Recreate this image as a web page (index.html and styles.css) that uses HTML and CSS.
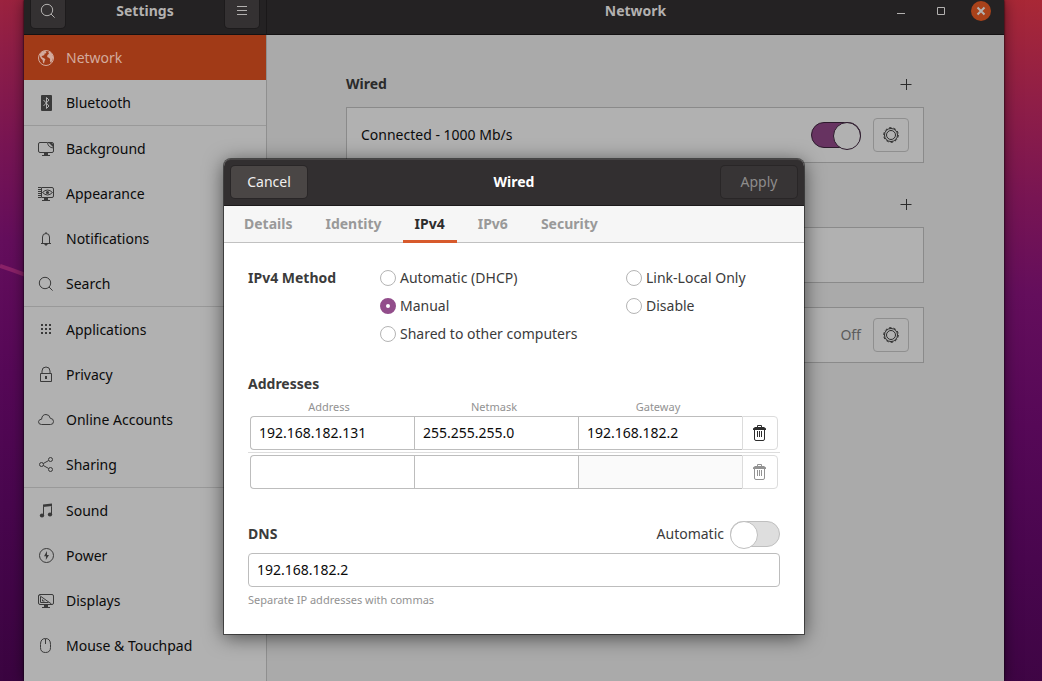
FILE: index.html
```html
<!DOCTYPE html>
<html lang="en">
<head>
<meta charset="utf-8">
<meta name="viewport" content="width=device-width, initial-scale=1">
<title>Settings – Network</title>
<link rel="stylesheet" href="styles.css">
</head>
<body class="desktop">
<svg class="streak" viewBox="0 0 26 20" aria-hidden="true"><path d="M0 4Q12 8 26 13" /></svg>
<div class="window">
  <aside class="sidebar">
    <header class="bar">
      <button class="bar-btn" aria-label="Search settings"><svg class="icon" viewBox="0 0 16 16"><circle cx="7" cy="7" r="5.7"/><path d="M11 11l3.6 3.6"/></svg></button>
      <h1 class="bar-title">Settings</h1>
      <button class="bar-btn" aria-label="Menu"><svg class="icon" viewBox="0 0 16 16"><path d="M3 3.5h10M3 7.5h10M3 11.5h10"/></svg></button>
    </header>
    <nav class="nav">
      <ul class="group">
        <li><a class="item active" href="#network"><svg class="icon" viewBox="0 0 16 16"><circle cx="8" cy="8" r="7.5"/><path class="solid" d="M1.500 4.500L4 1.800 7 .800 8.500 2 8 3.200 6.300 3.800 6.500 5 4.800 5.700 3.600 6 4 7.200 5.600 8 7.400 9.300 6.600 11 6 13.500 5 12.400 4.600 10 3 8.400 2 6.500zM10.200 2l1.800-.600 2.400 3 .800 2.600-.800 3.600-1.600 2.200-1-1.800.4-2-1.400-1.200-1.600-.800.2-2 1.600-1.200z"/></svg>Network</a></li>
        <li><a class="item" href="#bluetooth"><svg class="icon" viewBox="0 0 16 16"><rect class="solid" x="3" y="0" width="11" height="16" rx="1"/><path class="knock" d="M5.5 5l5.5 6-2.5 2.5v-11L11 5l-5.5 6"/></svg>Bluetooth</a></li>
      </ul>
      <ul class="group">
        <li><a class="item" href="#background"><svg class="icon" viewBox="0 0 16 16"><path d="M9 1.500H2q-1.500 0-1.500 1.500v7q0 1.500 1.500 1.500h12q1.500 0 1.500-1.500V7M9.500 1.500q.500 5 6 5.500V3q0-1.500-1.500-1.500z"/><path class="solid" d="M11 2l4 4V3.500Q15 2 13.500 2zM6 12h4v2h2v1H4v-1h2z"/></svg>Background</a></li>
        <li><a class="item" href="#appearance"><svg class="icon" viewBox="0 0 16 16"><path d="M3.500 1.500h10.500q1.500 0 1.500 1.500v7q0 1.500-1.500 1.500H3.500z"/><path class="dash" d="M1.500 1v11"/><path d="M4.500 6.500q5-5 10 0q-5 5-10 0z"/><circle class="solid" cx="9.500" cy="6.500" r="1.600"/><path class="solid" d="M6 12h4v2h2v1H4v-1h2z"/></svg>Appearance</a></li>
        <li><a class="item" href="#notifications"><svg class="icon" viewBox="0 0 16 16"><path d="M3 12.500h10M4.500 12V6q0-3.500 3.500-3.500T11.500 6v6M8 1v1.500"/><path class="solid" d="M6 13h4L8 15z"/></svg>Notifications</a></li>
        <li><a class="item" href="#search"><svg class="icon" viewBox="0 0 16 16"><circle cx="7" cy="7" r="5.700"/><path d="M11 11l3.600 3.600"/></svg>Search</a></li>
      </ul>
      <ul class="group">
        <li><a class="item" href="#applications"><svg class="icon" viewBox="0 0 16 16"><path class="solid" d="M3 2h2v2H3zM7 2h2v2H7zM11 2h2v2h-2zM3 6h2v2H3zM7 6h2v2H7zM11 6h2v2h-2zM3 10h2v2H3zM7 10h2v2H7zM11 10h2v2h-2z"/></svg>Applications</a></li>
        <li><a class="item" href="#privacy"><svg class="icon" viewBox="0 0 16 16"><path d="M2.500 6.500h11v8h-11zM4 6.500V4q0-4 4-4t4 4v2.500"/><path class="solid" d="M7 9h2v3H7z"/></svg>Privacy</a></li>
        <li><a class="item" href="#accounts"><svg class="icon" viewBox="0 0 16 16"><path d="M3.500 12.500Q.500 12.500.500 9.700 1 7.200 3.600 7.200 4 2.500 8 2.500q3.500 0 4.300 3.800 3.200.200 3.200 3.200t-3 3z"/></svg>Online Accounts</a></li>
        <li><a class="item" href="#sharing"><svg class="icon" viewBox="0 0 16 16"><circle cx="3.500" cy="7.500" r="2"/><circle cx="12.500" cy="2.500" r="2"/><circle cx="12.500" cy="12.500" r="2"/><path d="M5.300 6.500l5.400-3M5.300 8.500l5.400 3"/></svg>Sharing</a></li>
      </ul>
      <ul class="group">
        <li><a class="item" href="#sound"><svg class="icon" viewBox="0 0 16 16"><path class="solid" d="M5 1.500L14 .500V3L5 4zM5 1.500h1V12H5zM13 1h1v10h-1z"/><ellipse class="solid" cx="4" cy="12.500" rx="2.200" ry="2"/><ellipse class="solid" cx="12" cy="11.500" rx="2.200" ry="2"/></svg>Sound</a></li>
        <li><a class="item" href="#power"><svg class="icon" viewBox="0 0 16 16"><circle cx="8.500" cy="7.500" r="7"/><path class="solid" d="M9 3L6 8.200h2L7.800 12 11 6.900H9z"/></svg>Power</a></li>
        <li><a class="item" href="#displays"><svg class="icon" viewBox="0 0 16 16"><path d="M2 1.500h12q1.500 0 1.500 1.500v7q0 1.500-1.500 1.500H2q-1.500 0-1.500-1.500V3Q.500 1.500 2 1.500zM1.500 2.500l12 8.500M2.500 4v5.500h8M4.500 6.500v1.500h2"/><path class="solid" d="M6 12h4v2h2v1H4v-1h2z"/></svg>Displays</a></li>
        <li><a class="item" href="#mouse"><svg class="icon" viewBox="0 0 16 16"><path d="M7.500 .500q5 0 5 6v3q0 5-5 5t-5-5v-3q0-6 5-6zM7.500 1v5"/></svg>Mouse &amp; Touchpad</a></li>
      </ul>
    </nav>
  </aside>
  <main class="panel">
    <header class="bar">
      <h2 class="bar-title">Network</h2>
      <div class="controls">
        <button class="ctl" aria-label="Minimize"><svg class="icon" viewBox="0 0 16 16"><path d="M4 10.500h8"/></svg></button>
        <button class="ctl" aria-label="Maximize"><svg class="icon" viewBox="0 0 16 16"><path d="M4.500 4.500h7v7h-7z"/></svg></button>
        <button class="ctl close" aria-label="Close"><svg class="icon" viewBox="0 0 16 16"><path d="M4.500 4.500l7 7m0-7l-7 7"/></svg></button>
      </div>
    </header>
    <div class="content">
      <section class="block">
        <div class="block-head"><h3>Wired</h3><button class="add" aria-label="Add wired profile"><svg class="icon" viewBox="0 0 16 16"><path d="M2.500 8.500h11M8.500 3v11"/></svg></button></div>
        <div class="card">
          <label class="grow" for="wired-on">Connected - 1000 Mb/s</label>
          <input class="switch" id="wired-on" type="checkbox" checked>
          <button class="gear" aria-label="Wired options"><svg class="icon" viewBox="0 0 16 16"><circle cx="8" cy="8" r="4.500"/><circle cx="8" cy="8" r="6.500"/><circle class="teeth" cx="8" cy="8" r="7.300"/></svg></button>
        </div>
      </section>
      <section class="block">
        <div class="block-head"><h3>VPN</h3><button class="add" aria-label="Add VPN"><svg class="icon" viewBox="0 0 16 16"><path d="M2.500 8.500h11M8.500 3v11"/></svg></button></div>
        <div class="card"></div>
      </section>
      <section class="card">
        <span class="grow"></span>
        <span class="state">Off</span>
        <button class="gear" aria-label="Proxy options"><svg class="icon" viewBox="0 0 16 16"><circle cx="8" cy="8" r="4.500"/><circle cx="8" cy="8" r="6.500"/><circle class="teeth" cx="8" cy="8" r="7.300"/></svg></button>
      </section>
    </div>
  </main>
  <div class="modal-layer">
    <form class="dialog" role="dialog" aria-labelledby="dialog-title">
      <header class="dialog-bar">
        <button class="dialog-btn" type="button">Cancel</button>
        <h2 id="dialog-title">Wired</h2>
        <button class="dialog-btn apply" type="submit" disabled>Apply</button>
      </header>
      <div class="tabs" role="tablist">
        <button class="tab" type="button" role="tab">Details</button>
        <button class="tab" type="button" role="tab">Identity</button>
        <button class="tab current" type="button" role="tab" aria-selected="true">IPv4</button>
        <button class="tab" type="button" role="tab">IPv6</button>
        <button class="tab" type="button" role="tab">Security</button>
      </div>
      <div class="dialog-body">
        <div class="methods" role="radiogroup" aria-labelledby="method-title">
          <h3 id="method-title">IPv4 Method</h3>
          <div class="choices">
            <label class="choice"><input class="radio" type="radio" name="method">Automatic (DHCP)</label>
            <label class="choice"><input class="radio" type="radio" name="method" checked>Manual</label>
            <label class="choice"><input class="radio" type="radio" name="method">Shared to other computers</label>
          </div>
          <div class="choices">
            <label class="choice"><input class="radio" type="radio" name="method">Link-Local Only</label>
            <label class="choice"><input class="radio" type="radio" name="method">Disable</label>
          </div>
        </div>
        <h3 class="addresses-title">Addresses</h3>
        <table class="addresses">
          <thead><tr><th class="first">Address</th><th>Netmask</th><th>Gateway</th><th class="last"></th></tr></thead>
          <tbody>
            <tr>
              <td class="first"><input class="entry start" aria-label="Address 1" value="192.168.182.131"></td>
              <td><input class="entry" aria-label="Netmask 1" value="255.255.255.0"></td>
              <td><input class="entry" aria-label="Gateway 1" value="192.168.182.2"></td>
              <td class="last"><button class="trash" type="button" aria-label="Delete address 1"><svg class="icon" viewBox="1 0 16 16"><path d="M3.500 5v9q0 1.500 1.500 1.500h7q1.500 0 1.500-1.500V5M6.500 6v6M8.500 6v6M10.500 6v6M6.500 2V.500h4V2"/><path class="solid" d="M2 5V3.500l2-1.500h9l2 1.500V5z"/></svg></button></td>
            </tr>
            <tr>
              <td class="first"><input class="entry start" aria-label="Address 2"></td>
              <td><input class="entry" aria-label="Netmask 2"></td>
              <td><input class="entry" aria-label="Gateway 2" disabled></td>
              <td class="last"><button class="trash" type="button" aria-label="Delete address 2" disabled><svg class="icon" viewBox="1 0 16 16"><path d="M3.500 5v9q0 1.500 1.500 1.500h7q1.500 0 1.500-1.500V5M6.500 6v6M8.500 6v6M10.500 6v6M6.500 2V.500h4V2"/><path class="solid" d="M2 5V3.500l2-1.500h9l2 1.500V5z"/></svg></button></td>
            </tr>
          </tbody>
        </table>
        <div class="dns-head">
          <h3><label for="dns">DNS</label></h3>
          <label class="auto">Automatic<input class="switch light" type="checkbox"></label>
        </div>
        <input class="entry dns" id="dns" value="192.168.182.2">
        <p class="hint">Separate IP addresses with commas</p>
      </div>
    </form>
  </div>
</div>
</body>
</html>
```
FILE: styles.css
```css
* { box-sizing: border-box; }

html { height: 100%; }

.desktop {
  margin: 0;
  height: 100%;
  overflow: hidden;
  position: relative;
  font: 14px/20px "Noto Sans", sans-serif;
  color: #0b0b0b;
  background: linear-gradient(183deg, #a92836 0%, #8f1e47 14%, #781553 27%, #640e5c 40%, #560857 58%, #49064e 76%, #3a0440 100%);
}

h1, h2, h3, p, ul { margin: 0; padding: 0; }
h1, h2, h3 { font-size: 14px; font-weight: 700; }
ul { list-style: none; }
button, input { font: inherit; color: inherit; margin: 0; }
button { padding: 0; border: 0; background: none; }

.streak { position: absolute; left: 0; top: 262px; width: 26px; height: 20px; fill: none; stroke: #8a2268; stroke-width: 4; }

.icon { width: 16px; height: 16px; flex: none; display: block; fill: none; stroke: currentColor; stroke-width: 1; overflow: visible; }
.solid { fill: currentColor; stroke: none; }
.knock { stroke: #b1b1b1; }
.dash { stroke-width: 3; stroke-dasharray: 1 1; }
.teeth { stroke-width: 1; stroke-dasharray: 2.600 1.990; }

.window {
  position: relative;
  display: grid;
  grid-template-columns: 243px 1fr;
  height: 100%;
  margin: 0 38px 0 24px;
  background: #aaa;
  box-shadow: 0 0 2px #000, 0 0 14px rgba(0, 0, 0, .5);
}

.bar {
  display: flex;
  align-items: center;
  height: 47px;
  margin-top: -12px;
  padding: 0 7px;
  color: #b3b1b0;
  background: #242223;
  border-bottom: 1px solid #141213;
}
.bar-title { flex: 1; text-align: center; }
.bar-btn { width: 34px; height: 34px; display: grid; place-items: center; background: #343132; border-radius: 4px; box-shadow: 0 0 0 1px #1d1b1c; }

.sidebar { background: #b1b1b1; border-right: 1px solid #8f8f8f; }
.sidebar .bar { border-right: 1px solid #1a1819; margin-right: -1px; }
.group { border-bottom: 1px solid #999; }
.group:last-child { border-bottom: 0; }
.item { display: flex; align-items: center; gap: 12px; height: 45px; padding: 0 14px; color: #0b0b0b; text-decoration: none; }
.item .icon { color: #3a3a3a; }
.item.active { color: #d3aa9d; background: #a13a17; }
.item.active .icon { color: #d3aa9d; }

.panel .bar { padding: 0 13px; position: relative; }
.controls { position: absolute; right: 13px; display: flex; gap: 20px; }
.ctl { width: 20px; height: 20px; display: grid; place-items: center; border-radius: 50%; color: #b3b1b0; }
.close { background: #a9421a; }
.close .icon { stroke-width: 2; }

.panel { padding-right: 1px; }
.panel .bar { margin-right: -1px; }
.content { display: grid; gap: 24px; max-width: 578px; margin: 38px auto 0; }
.block-head { display: flex; align-items: center; justify-content: space-between; height: 22px; margin-bottom: 12px; color: #2b2b2b; }
.block:first-child { margin-bottom: 6px; }
.add { width: 36px; height: 22px; display: grid; place-items: center; }
.card { display: flex; align-items: center; gap: 12px; height: 56px; padding: 0 14px; background: #b1b1b1; border: 1px solid #8a8a8a; }
.grow { flex: 1; }
.state { color: #5c5c5c; }
.gear { width: 36px; height: 34px; display: grid; place-items: center; border: 1px solid #8f8f8f; border-radius: 4px; color: #2b2b2b; }

.switch { appearance: none; width: 50px; height: 26px; display: flex; border: 1px solid #2c1a2c; border-radius: 13px; background: #673361; }
.switch::before { content: ""; width: 26px; height: 26px; margin: -1px; border: 1px solid #2c1a2c; border-radius: 50%; background: #b1b1b1; }
.switch:checked { justify-content: flex-end; }
.switch.light { border-color: #bfbfbf; background: #dedede; }
.switch.light::before { border-color: #bfbfbf; background: #fff; }

.modal-layer { position: absolute; inset: 0; display: flex; align-items: flex-start; justify-content: center; padding-top: 159px; }
.dialog { width: 580px; background: #fff; color: #3b3b3b; border-radius: 7px 7px 0 0; box-shadow: 0 0 0 1px rgba(0, 0, 0, .5), 0 3px 20px rgba(0, 0, 0, .6); }
.dialog-bar { display: grid; grid-template-columns: 1fr auto 1fr; align-items: center; height: 47px; padding: 0 7px; color: #fff; background: #322f30; border-bottom: 1px solid #1c1a1b; border-radius: 7px 7px 0 0; box-shadow: inset 0 1px #484546; }
.dialog-btn { justify-self: start; height: 32px; padding: 0 16px; min-width: 76px; border-radius: 4px; background: #4a4645; color: #f0efee; box-shadow: 0 0 0 1px #292627; }
.apply { justify-self: end; background: #373435; color: #8e8c8c; }

.tabs { display: flex; gap: 9px; height: 37px; padding: 0 8px; background: #f6f6f6; border-bottom: 1px solid #c1c1c1; }
.tab { height: 37px; padding: 0 12px; border-bottom: 3px solid transparent; border-top: 2px solid transparent; font-weight: 700; color: #999; }
.tab.current { color: #2d2d2d; border-bottom-color: #d75a2c; }

.dialog-body { padding: 21px 24px 24px; }
.methods { display: grid; grid-template-columns: 132px 246px 1fr; line-height: 28px; }
.choice { display: flex; align-items: center; gap: 4px; height: 28px; white-space: nowrap; }
.radio { appearance: none; width: 16px; height: 16px; border: 1px solid #b4b4b4; border-radius: 50%; background: #fff; }
.radio:checked { border: 6px solid #924d8b; }

.addresses-title { margin-top: 26px; }
.addresses { width: 100%; table-layout: fixed; border-collapse: collapse; margin-top: 4px; }
.addresses th { height: 18px; padding: 0 4px 0 0; font-size: 11px; line-height: 16px; font-weight: 400; color: #929292; }
.addresses td { padding: 2px 0; }
.addresses tbody tr:first-child td { padding-top: 0; border-bottom: 1px solid #ddd; }
.addresses th.first { width: 166px; }
.addresses th.last { width: 38px; }
.addresses td.first { padding-left: 2px; }
.addresses td.last { padding-right: 2px; }

.entry { display: block; width: 100%; height: 34px; padding: 0 8px 2px; border: 1px solid #bdbdbd; border-radius: 0; background: #fff; color: #0b0b0b; }
.addresses .entry { border-right: 0; }
.entry.start { border-radius: 4px 0 0 4px; }
.entry:disabled { background: #fafafa; }
.trash { width: 100%; height: 34px; display: grid; place-items: center; border: 1px solid #dcdcdc; border-radius: 0 4px 4px 0; color: #2d2d2d; }
.trash:disabled { color: #939393; }

.dns-head { display: flex; align-items: center; justify-content: space-between; margin-top: 30px; }
.auto { display: flex; align-items: center; gap: 6px; }
.entry.dns { margin-top: 6px; border-radius: 4px; }
.hint { margin-top: 3px; font-size: 11px; color: #929292; }
```
